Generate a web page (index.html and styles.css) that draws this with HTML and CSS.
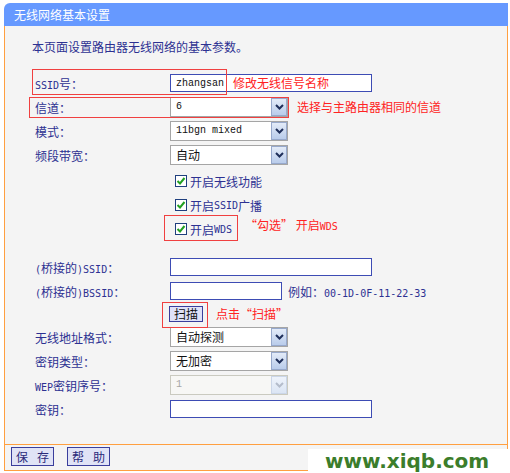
FILE: index.html
```html
<!DOCTYPE html>
<html lang="zh-CN">
  <head>
    <meta charset="UTF-8" />
    <meta name="viewport" content="width=device-width, initial-scale=1.0" />
    <title>无线网络基本设置</title>
    <link rel="stylesheet" href="styles.css">
  </head>
  <body>
    <div class="page">
      <div class="frame">
        <div class="title-bar">无线网络基本设置</div>

        <div class="panel">
          <p class="intro">本页面设置路由器无线网络的基本参数。</p>

          <div class="row">
            <span class="label"><span class="en">SSID</span>号：</span>
            <span class="text-input"><span class="val mono">zhangsan</span></span>
          </div>
          <div class="row">
            <span class="label">信道：</span>
            <div class="select"><span class="val mono">6</span><span class="arrow"><svg width="9" height="6" viewBox="0 0 9 6"><polyline points="1,1 4.5,4.5 8,1" /></svg></span></div>
          </div>
          <div class="row">
            <span class="label">模式：</span>
            <div class="select"><span class="val mono">11bgn mixed</span><span class="arrow"><svg width="9" height="6" viewBox="0 0 9 6"><polyline points="1,1 4.5,4.5 8,1" /></svg></span></div>
          </div>
          <div class="row">
            <span class="label">频段带宽：</span>
            <div class="select"><span class="val">自动</span><span class="arrow"><svg width="9" height="6" viewBox="0 0 9 6"><polyline points="1,1 4.5,4.5 8,1" /></svg></span></div>
          </div>

          <div class="row checks">
            <span class="label"></span>
            <span class="box"><svg width="10" height="10" viewBox="0 0 10 10"><polyline points="1.5,5 4,7.5 8.5,2" /></svg></span>开启无线功能
          </div>
          <div class="row">
            <span class="label"></span>
            <span class="box"><svg width="10" height="10" viewBox="0 0 10 10"><polyline points="1.5,5 4,7.5 8.5,2" /></svg></span>开启<span class="en">SSID</span>广播
          </div>
          <div class="row">
            <span class="label"></span>
            <span class="box"><svg width="10" height="10" viewBox="0 0 10 10"><polyline points="1.5,5 4,7.5 8.5,2" /></svg></span>开启<span class="en">WDS</span>
          </div>

          <div class="row bridge">
            <span class="label"><span class="en">(</span>桥接的<span class="en">)SSID</span>：</span>
            <span class="text-input"></span>
          </div>
          <div class="row">
            <span class="label"><span class="en">(</span>桥接的<span class="en">)BSSID</span>：</span>
            <span class="text-input short"></span>
            <span class="hint">例如：<span class="en">00-1D-0F-11-22-33</span></span>
          </div>
          <div class="row scan">
            <span class="label"></span>
            <span class="btn">扫描</span>
          </div>
          <div class="row">
            <span class="label">无线地址格式：</span>
            <div class="select"><span class="val">自动探测</span><span class="arrow"><svg width="9" height="6" viewBox="0 0 9 6"><polyline points="1,1 4.5,4.5 8,1" /></svg></span></div>
          </div>
          <div class="row">
            <span class="label">密钥类型：</span>
            <div class="select"><span class="val">无加密</span><span class="arrow"><svg width="9" height="6" viewBox="0 0 9 6"><polyline points="1,1 4.5,4.5 8,1" /></svg></span></div>
          </div>
          <div class="row">
            <span class="label"><span class="en">WEP</span>密钥序号：</span>
            <div class="select disabled"><span class="val mono">1</span><span class="arrow"><svg width="9" height="6" viewBox="0 0 9 6"><polyline points="1,1 4.5,4.5 8,1" /></svg></span></div>
          </div>
          <div class="row">
            <span class="label">密钥：</span>
            <span class="text-input"></span>
          </div>
        </div>

        <div class="footer">
          <span class="fbtn"><span>保</span><span>存</span></span>
          <span class="fbtn"><span>帮</span><span>助</span></span>
        </div>
      </div>

      <!-- annotations drawn over the form -->
      <div class="mark mark-ssid"></div>
      <div class="mark mark-channel"></div>
      <div class="mark mark-wds"></div>
      <div class="mark mark-scan"></div>
      <span class="note note-ssid">修改无线信号名称</span>
      <span class="note note-channel">选择与主路由器相同的信道</span>
      <span class="note note-wds">“勾选” 开启<span class="en">WDS</span></span>
      <span class="note note-scan">点击“扫描”</span>

      <div class="watermark">www.xiqb.com</div>
    </div>
  </body>
</html>
```

FILE: styles.css
```css
body {
  margin: 0;
  background: #fff;
  font-family: "Noto Sans CJK SC", sans-serif;
  font-size: 12px;
  color: #2d3192;
}
.page {
  position: relative;
  width: 510px;
  height: 473px;
  padding: 3px 0 0 4px;
  box-sizing: border-box;
}
.frame {
  width: 504px;
}
.title-bar {
  height: 23px;
  line-height: 23px;
  padding-left: 10px;
  background: #6699ff;
  border-radius: 6px 0 0 0;
  color: #fff;
}
.panel {
  height: 418px;
  box-sizing: border-box;
  padding: 9px 0 0 30px;
  background: #f4f4f4;
  border-left: 1px solid #ff9f40;
  border-right: 1px solid #ff9f40;
}
.intro {
  margin: 0 0 12px -3px;
  line-height: 24px;
}
.row {
  display: flex;
  align-items: center;
  height: 24px;
  white-space: nowrap;
}
.row.checks {
  margin-top: 2px;
}
.row.bridge {
  margin-top: 14px;
}
.row.scan {
  height: 22px;
}
.label {
  width: 135px;
  flex: none;
}
.en {
  font-family: "DejaVu Sans Mono", monospace;
  font-size: 10px;
}
.mono {
  font-family: "Liberation Mono", monospace;
  font-size: 10px;
}
.text-input {
  display: flex;
  align-items: center;
  width: 202px;
  height: 18px;
  box-sizing: border-box;
  border: 1px solid #3d4cb4;
  background: #fff;
}
.text-input.short {
  width: 112px;
}
.text-input .val {
  padding-left: 5px;
  color: #111;
}
.select {
  display: flex;
  width: 118px;
  height: 20px;
  box-sizing: border-box;
  border: 1px solid #a5a5a5;
  background: #fff;
}
.select .val {
  flex: 1;
  padding-left: 5px;
  line-height: 18px;
  color: #111;
}
.arrow {
  display: flex;
  align-items: center;
  justify-content: center;
  width: 16px;
  flex: none;
  box-sizing: border-box;
  border: 1px solid #97a9cc;
  background: linear-gradient(#e3ebf8, #b9cceb);
}
.arrow polyline {
  fill: none;
  stroke: #1f2f5a;
  stroke-width: 2;
}
.select.disabled {
  border-color: #cacac0;
  background: #f7f7f5;
}
.select.disabled .val {
  color: #a6a6a6;
}
.select.disabled .arrow {
  border-color: #cbd6e8;
  background: linear-gradient(#eef3fb, #dbe5f4);
}
.select.disabled polyline {
  stroke: #b4bccb;
}
.box {
  display: flex;
  align-items: center;
  justify-content: center;
  width: 12px;
  height: 12px;
  box-sizing: border-box;
  margin: 0 3px 0 5px;
  border: 1px solid #1f3f7e;
  background: #fff;
}
.box polyline {
  fill: none;
  stroke: #22a022;
  stroke-width: 2;
}
.hint {
  margin-left: 6px;
}
.btn {
  margin-left: -1px;
  height: 16px;
  line-height: 14px;
  padding: 0 4px;
  box-sizing: border-box;
  border: 1px solid #3a3e9c;
  background: #dfe2f8;
  color: #111;
}
.footer {
  display: flex;
  gap: 13px;
  height: 23px;
  padding: 2px 0 0 6px;
  background: #f4f4f4;
  border: 1px solid #ff9f40;
}
.fbtn {
  display: flex;
  justify-content: space-between;
  width: 43px;
  height: 19px;
  line-height: 17px;
  padding: 0 4px;
  box-sizing: border-box;
  border: 1px solid #3a3e9c;
  background: #e0e3f6;
  color: #2a2a7a;
}
.mark {
  position: absolute;
  box-sizing: border-box;
  border: 1px solid #f04040;
}
.mark-ssid {
  left: 32px;
  top: 69px;
  width: 195px;
  height: 26px;
}
.mark-channel {
  left: 29px;
  top: 97px;
  width: 260px;
  height: 21px;
}
.mark-wds {
  left: 164px;
  top: 215px;
  width: 74px;
  height: 26px;
}
.mark-scan {
  left: 162px;
  top: 302px;
  width: 46px;
  height: 26px;
}
.note {
  position: absolute;
  line-height: 14px;
  color: #ff2222;
  white-space: nowrap;
}
.note-ssid {
  left: 233px;
  top: 76px;
}
.note-channel {
  left: 297px;
  top: 100px;
}
.note-wds {
  left: 245px;
  top: 218px;
}
.note-scan {
  left: 216px;
  top: 307px;
}
.watermark {
  position: absolute;
  left: 308px;
  top: 449px;
  width: 202px;
  height: 24px;
  box-sizing: border-box;
  padding-left: 17px;
  background: #fff;
  color: #3b7d2b;
  font-family: "DejaVu Sans", sans-serif;
  font-weight: bold;
  font-size: 20px;
  line-height: 24px;
}
```
